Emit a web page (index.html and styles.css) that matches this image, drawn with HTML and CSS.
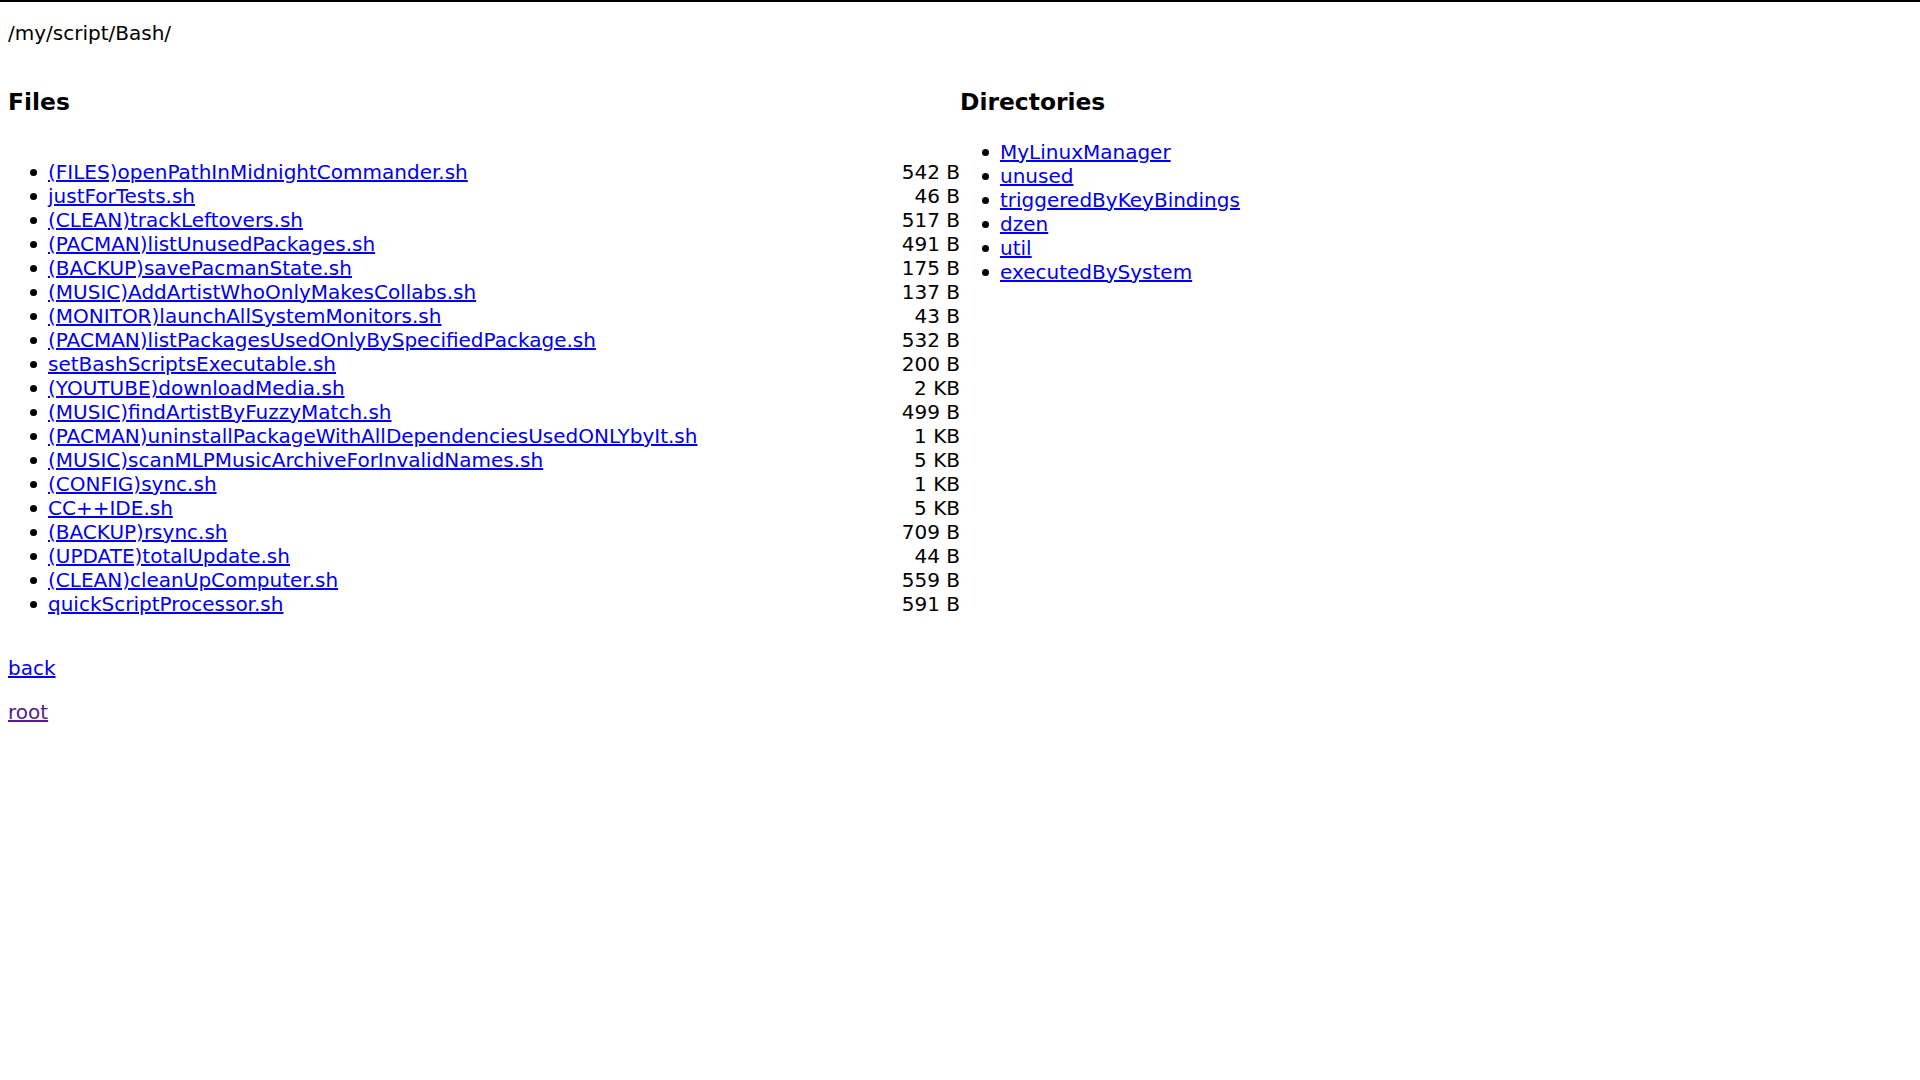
FILE: index.html
```html
<!DOCTYPE html>
<html>
<head>
<meta charset="utf-8">
<title>/my/script/Bash/</title>
<link rel="stylesheet" href="styles.css">
</head>
<body>
<div class="page">
  <p class="path">/my/script/Bash/</p>
  <div class="columns">
    <section class="col">
      <h3>Files</h3>
      <ul class="files">
        <li><span class="size">542 B</span><a href="#">(FILES)openPathInMidnightCommander.sh</a></li>
        <li><span class="size">46 B</span><a href="#">justForTests.sh</a></li>
        <li><span class="size">517 B</span><a href="#">(CLEAN)trackLeftovers.sh</a></li>
        <li><span class="size">491 B</span><a href="#">(PACMAN)listUnusedPackages.sh</a></li>
        <li><span class="size">175 B</span><a href="#">(BACKUP)savePacmanState.sh</a></li>
        <li><span class="size">137 B</span><a href="#">(MUSIC)AddArtistWhoOnlyMakesCollabs.sh</a></li>
        <li><span class="size">43 B</span><a href="#">(MONITOR)launchAllSystemMonitors.sh</a></li>
        <li><span class="size">532 B</span><a href="#">(PACMAN)listPackagesUsedOnlyBySpecifiedPackage.sh</a></li>
        <li><span class="size">200 B</span><a href="#">setBashScriptsExecutable.sh</a></li>
        <li><span class="size">2 KB</span><a href="#">(YOUTUBE)downloadMedia.sh</a></li>
        <li><span class="size">499 B</span><a href="#">(MUSIC)findArtistByFuzzyMatch.sh</a></li>
        <li><span class="size">1 KB</span><a href="#">(PACMAN)uninstallPackageWithAllDependenciesUsedONLYbyIt.sh</a></li>
        <li><span class="size">5 KB</span><a href="#">(MUSIC)scanMLPMusicArchiveForInvalidNames.sh</a></li>
        <li><span class="size">1 KB</span><a href="#">(CONFIG)sync.sh</a></li>
        <li><span class="size">5 KB</span><a href="#">CC++IDE.sh</a></li>
        <li><span class="size">709 B</span><a href="#">(BACKUP)rsync.sh</a></li>
        <li><span class="size">44 B</span><a href="#">(UPDATE)totalUpdate.sh</a></li>
        <li><span class="size">559 B</span><a href="#">(CLEAN)cleanUpComputer.sh</a></li>
        <li><span class="size">591 B</span><a href="#">quickScriptProcessor.sh</a></li>
      </ul>
    </section>
    <section class="col">
      <h3>Directories</h3>
      <ul class="dirs">
        <li><a href="#">MyLinuxManager</a></li>
        <li><a href="#">unused</a></li>
        <li><a href="#">triggeredByKeyBindings</a></li>
        <li><a href="#">dzen</a></li>
        <li><a href="#">util</a></li>
        <li><a href="#">executedBySystem</a></li>
      </ul>
    </section>
  </div>
  <p class="nav"><a href="#">back</a></p>
  <p class="nav"><a href="#" class="visited">root</a></p>
</div>
</body>
</html>
```

FILE: styles.css
```css
html, body {
  margin: 0;
  padding: 0;
  background: #fff;
}
body {
  font-family: "DejaVu Sans", sans-serif;
  font-size: 20px;
  color: #000;
}
.page {
  border-top: 2px solid #000;
  padding: 0 8px;
}
.path {
  margin: 19px 0 20px;
}
.columns {
  display: flex;
}
.col {
  flex: 1 1 0;
}
h3 {
  font-size: 1.17em;
  margin: calc(1em - 0.5px) 0 calc(1em + 0.5px);
}
a {
  color: #0000ee;
}
a.visited {
  color: #551a8b;
}
ul {
  margin: 20px 0;
  padding-left: 40px;
  list-style: none;
}
.files {
  padding-top: 20px;
}
li {
  line-height: 24px;
  position: relative;
}
li::before {
  content: "";
  position: absolute;
  left: -18px;
  top: 9.5px;
  width: 7px;
  height: 7px;
  border-radius: 50%;
  background: #000;
}
.size {
  float: right;
}
.nav {
  margin: 20px 0;
}
```
